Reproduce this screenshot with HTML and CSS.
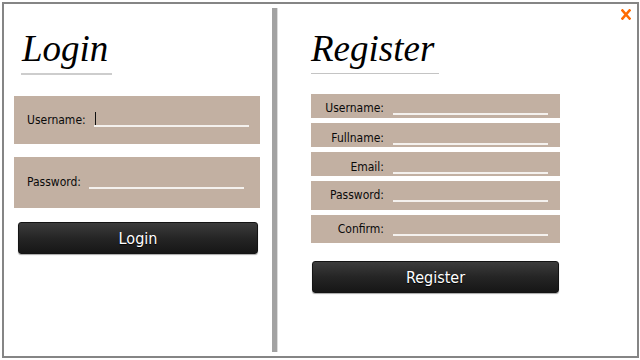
FILE: index.html
```html
<!DOCTYPE html>
<html>
<head>
<meta charset="utf-8">
<link rel="stylesheet" href="styles.css">
</head>
<body>
<div class="frame">
  <a class="close" href="#" aria-label="Close">
    <svg width="10" height="11" viewBox="0 0 10 11"><path d="M1.5 1.5 L8.5 9.5 M8.5 1.5 L1.5 9.5" stroke="#ff6a00" stroke-width="2.6" stroke-linecap="square"/></svg>
  </a>
  <section class="panel login">
    <h1 class="title">Login</h1>
    <div class="rule rule-thick"></div>
    <div class="lbox lbox-user">
      <span class="llabel">Username:</span>
      <span class="line"><span class="caret"></span></span>
    </div>
    <div class="lbox lbox-pass">
      <span class="llabel">Password:</span>
      <span class="line"></span>
    </div>
    <button class="btn btn-login">Login</button>
  </section>
  <div class="divider"></div>
  <section class="panel register">
    <h1 class="title">Register</h1>
    <div class="rule rule-thin"></div>
    <div class="rows">
      <div class="row row-a"><span class="rlabel">Username:</span><span class="line"></span></div>
      <div class="row row-b"><span class="rlabel">Fullname:</span><span class="line"></span></div>
      <div class="row row-b"><span class="rlabel">Email:</span><span class="line"></span></div>
      <div class="row row-c"><span class="rlabel">Password:</span><span class="line"></span></div>
      <div class="row row-d"><span class="rlabel">Confirm:</span><span class="line"></span></div>
    </div>
    <button class="btn btn-register">Register</button>
  </section>
</div>
</body>
</html>
```
FILE: styles.css
```css
html, body {
  margin: 0;
  padding: 0;
  background: #ffffff;
}
body {
  width: 640px;
  height: 360px;
  overflow: hidden;
  font-family: "DejaVu Sans Condensed", "DejaVu Sans", sans-serif;
}
.frame {
  position: relative;
  margin: 2px 0 0 2px;
  width: 633px;
  height: 352px;
  border: 2px solid #858585;
  display: flex;
  background: #fff;
}
.close {
  position: absolute;
  top: 5px;
  right: 6px;
  width: 10px;
  height: 11px;
  display: block;
}
.close svg { display: block; }
.panel {
  display: flex;
  flex-direction: column;
  align-items: flex-start;
}
.login {
  width: 258px;
  padding: 23px 0 0 10px;
}
.register {
  flex: 1;
  padding: 23px 0 0 33px;
}
.title {
  margin: 0;
  font-family: "Liberation Serif", "Times New Roman", serif;
  font-style: italic;
  font-weight: normal;
  font-size: 37px;
  line-height: 44px;
  color: #000;
}
.login .title { margin-left: 8px; }
.rule {
  margin-top: 2px;
}
.rule-thick {
  margin-left: 7px;
  width: 91px;
  height: 2px;
  background: #cdcdcd;
}
.rule-thin {
  width: 128px;
  height: 1px;
  background: #c4c4c4;
}
.lbox {
  width: 246px;
  background: #c2b0a2;
  display: flex;
  align-items: flex-end;
  box-sizing: border-box;
  padding-left: 13px;
}
.lbox-user {
  margin-top: 21px;
  height: 48px;
  padding-bottom: 17px;
}
.lbox-pass {
  margin-top: 13px;
  height: 51px;
  padding-bottom: 19px;
}
.llabel, .rlabel {
  font-family: "DejaVu Sans Condensed", "DejaVu Sans", sans-serif;
  font-size: 12px;
  line-height: 14px;
  color: #0a0a0a;
}
.llabel { margin-right: 8px; }
.line {
  display: block;
  width: 155px;
  height: 12px;
  border-bottom: 2px solid #f4f1ee;
  position: relative;
}
.caret {
  position: absolute;
  left: 1px;
  top: -1px;
  width: 1px;
  height: 13px;
  background: #111;
}
.btn {
  display: block;
  height: 32px;
  border: 1px solid #141414;
  border-radius: 3px;
  background: linear-gradient(#3c3c3c, #252525 50%, #161616);
  box-shadow: 0 1px 1px rgba(0,0,0,0.35);
  color: #fff;
  font-family: "DejaVu Sans Condensed", "DejaVu Sans", sans-serif;
  font-size: 16px;
  text-shadow: 0 1px 1px #000;
  padding: 0;
  box-sizing: border-box;
}
.btn-login {
  margin: 14px 0 0 4px;
  width: 240px;
}
.divider {
  width: 5px;
  margin: 4px 0 4px 0;
  background: #a2a2a2;
  border-right: 1px solid #dcdcdc;
}
.rows {
  margin-top: 20px;
  display: flex;
  flex-direction: column;
  gap: 5px;
}
.row {
  width: 249px;
  background: #c2b0a2;
  display: flex;
  align-items: flex-end;
  box-sizing: border-box;
}
.row-a { height: 24px; padding-bottom: 3px; }
.row-b { height: 24px; padding-bottom: 2px; }
.row-c { height: 29px; padding-bottom: 8px; }
.row-d { height: 28px; padding-bottom: 7px; }
.rlabel {
  width: 73px;
  text-align: right;
  margin-right: 9px;
}
.btn-register {
  margin: 18px 0 0 1px;
  width: 247px;
  height: 32px;
}
```
